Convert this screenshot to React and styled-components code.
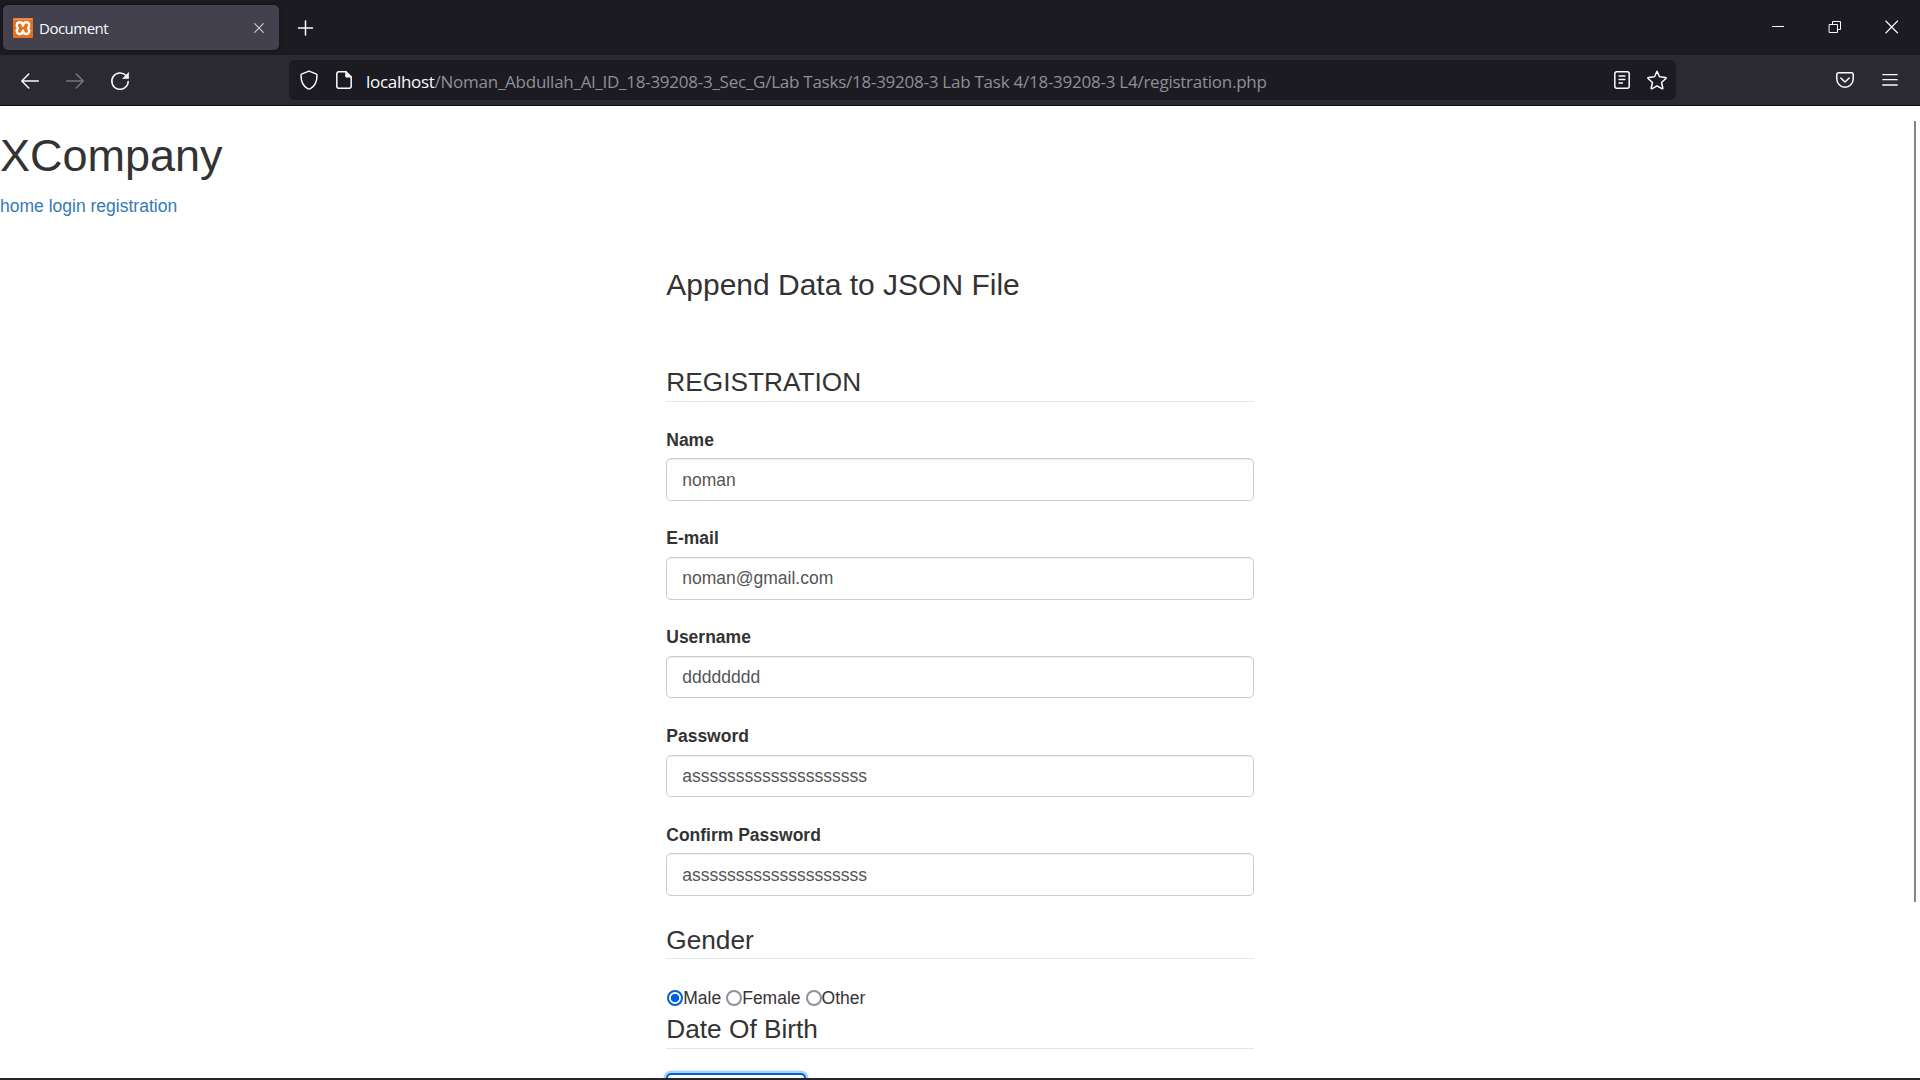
import React, { useState } from "react";
import styled, { createGlobalStyle, css } from "styled-components";

const GlobalStyle = createGlobalStyle`
  * { box-sizing: border-box; }
  html, body { margin: 0; padding: 0; height: 100%; overflow: hidden; background: #fff; }
  #root { height: 100%; }
`;

const uiFont = `"Open Sans", "Noto Sans", sans-serif`;
const pageFont = `"Liberation Sans", Arial, sans-serif`;

const Window = styled.div`
  width: 1920px;
  height: 1080px;
  display: flex;
  flex-direction: column;
  overflow: hidden;
  background: #fff;
`;

const TabStrip = styled.header`
  flex: none;
  height: 55px;
  display: flex;
  align-items: flex-start;
  padding: 5px 21px 0 3px;
  background: #1c1b22;
  color: #fbfbfe;
`;

const Tab = styled.div`
  width: 276px;
  height: 45px;
  display: flex;
  align-items: center;
  padding: 1px 14px 0 10px;
  border-radius: 5px;
  background: #42414d;
  box-shadow: 0 0 5px rgba(0, 0, 0, 0.4);
`;

const TabTitle = styled.span`
  flex: 1;
  margin-left: 6px;
  font: 15px/20px ${uiFont};
  letter-spacing: -0.5px;
`;

const Icon = styled.svg`
  display: block;
  flex: none;
  width: ${(p) => p.$size || 20}px;
  height: ${(p) => p.$size || 20}px;
  margin-top: ${(p) => p.$drop || 0}px;
  fill: none;
  stroke: ${(p) => p.$color || "#fbfbfe"};
  stroke-width: ${(p) => p.$stroke || 1.5};
  stroke-linecap: round;
  stroke-linejoin: round;
`;

const NewTab = styled.div`
  margin: 13px 0 0 16px;
`;

const WindowControls = styled.div`
  display: flex;
  gap: 43px;
  margin: 15px 0 0 auto;
`;

const Toolbar = styled.nav`
  flex: none;
  height: 51px;
  display: flex;
  align-items: center;
  padding: 0 20px;
  background: #2b2a33;
  border-bottom: 1px solid #0c0c0d;
`;

const IconGroup = styled.div`
  display: flex;
  gap: 25px;
  margin-left: ${(p) => (p.$end ? "auto" : "0")};
`;

const AddressBar = styled.div`
  width: 1387px;
  height: 40px;
  margin-left: 159px;
  display: flex;
  align-items: center;
  padding: 0 9px 0 10px;
  gap: 15px;
  border-radius: 5px;
  background: #1c1b22;
`;

const Address = styled.span`
  flex: 1;
  margin-left: -3px;
  padding-top: 3px;
  font: 17px/24px ${uiFont};
  letter-spacing: -0.25px;
  white-space: pre;
  color: #8f8f96;
`;

const Host = styled.span`
  color: #fbfbfe;
  letter-spacing: -0.3px;
`;

const Viewport = styled.main`
  flex: 1;
  min-height: 0;
  display: flex;
  justify-content: space-between;
  overflow: hidden;
  border-bottom: 2px solid #252427;
  font: 17.5px/25px ${pageFont};
  color: #333;
`;

const Page = styled.div`
  flex: 1;
  padding-top: 25px;
`;

const ScrollThumb = styled.div`
  width: 2px;
  height: 781px;
  margin: 15px 4px 0 0;
  background: #858585;
`;

const Brand = styled.h1`
  margin: 0 0 12.5px;
  font-size: 45px;
  font-weight: 400;
  line-height: 49.5px;
`;

const Links = styled.div`
  height: 25px;
  padding-top: 0.5px;
  display: flex;
  gap: 4.9px;
`;

const PageLink = styled.a`
  color: #337ab7;
  text-decoration: none;
`;

const Container = styled.section`
  width: 587.5px;
  margin: 50px 0 0 666.25px;
`;

const Title = styled.h3`
  margin: 0 0 62.5px;
  font-size: 30px;
  font-weight: 400;
  line-height: 33px;
`;

const Legend = styled.div`
  height: 38.5px;
  margin-bottom: 25px;
  padding-top: ${(p) => p.$inset || 0}px;
  border-bottom: 1px solid #e5e5e5;
  font-size: 26.25px;
  line-height: 37.5px;
`;

const Field = styled.label`
  display: flex;
  flex-direction: column;
  gap: 6.25px;
  margin-bottom: 25px;
`;

const FieldName = styled.span`
  height: 25px;
  padding-top: 0.5px;
  font-weight: 700;
`;

const inputBox = css`
  height: 42.5px;
  padding: 8px 15px 7px;
  border: 1px solid #ccc;
  border-radius: 5px;
  background: #fff;
  box-shadow: inset 0 1px 1px rgba(0, 0, 0, 0.075);
  font: 17.5px/25px ${pageFont};
  color: #555;
  outline: none;
`;

const Input = styled.input`
  ${inputBox}
  width: 100%;
`;

const DateInput = styled.input`
  ${inputBox}
  display: block;
  width: 140px;
  margin-top: -1.5px;
  border: 2px solid #0060df;
  box-shadow: 0 0 0 2.5px #a9d6f5;
`;

const Choices = styled.div`
  height: 26.5px;
  display: flex;
  align-items: center;
  padding: 1px 0 0 1px;
  gap: 5px;
`;

const Choice = styled.label`
  display: flex;
  align-items: center;
  line-height: 25px;
`;

const Radio = styled.input`
  appearance: none;
  width: 16px;
  height: 16px;
  margin: 0 0 1px;
  border: 2px solid #8f8f9d;
  border-radius: 50%;
  background: #fff;
  &:checked {
    border-color: #0060df;
    background: radial-gradient(circle, #0060df 3.8px, #fff 4.5px);
  }
`;

const Favicon = () => (
  <Icon viewBox="0 0 20 20" $stroke="2.4" $color="#fff">
    <rect width="20" height="20" rx="1" fill="#e8701d" stroke="none" />
    <path d="M1 1.2h18" stroke="#f6a66c" strokeWidth="1" />
    <path d="M10 7.6C9.6 5 8.400 4.200 6.700 4.200C3.500 4.200 3 8.200 4.900 10.100C3 12.200 3.500 16 6.700 16C8.400 16 9.600 15.200 10 12.800C10.400 15.200 11.600 16 13.300 16C16.500 16 17 12.200 15.100 10.100C17 8.200 16.500 4.200 13.300 4.200C11.600 4.200 10.400 5 10 7.600Z" />
  </Icon>
);

const fields = [
  ["Name", "noman"],
  ["E-mail", "noman@gmail.com"],
  ["Username", "dddddddd"],
  ["Password", "a" + "s".repeat(20)],
  ["Confirm Password", "a" + "s".repeat(20)],
];

export default function App() {
  const [gender, setGender] = useState("Male");
  return (
    <Window>
      <GlobalStyle />
      <TabStrip>
        <Tab>
          <Favicon />
          <TabTitle>Document</TabTitle>
          <Icon $size={12} viewBox="0 0 12 12" $drop={-1} $stroke="1.1" $color="#d0d0d6">
            <path d="M1.7 1.7l8.6 8.6M10.3 1.7l-8.6 8.6" />
          </Icon>
        </Tab>
        <NewTab>
          <Icon viewBox="0 0 20 20">
            <path d="M10.5 3v14M3.5 10h14" />
          </Icon>
        </NewTab>
        <WindowControls>
          <Icon $size={14} viewBox="0 0 14 14" $stroke="1">
            <path d="M1 6.5h12" strokeLinecap="butt" />
          </Icon>
          <Icon $size={14} viewBox="0 0 14 14" $stroke="1">
            <path d="M1.5 4.5h8v8h-8zM4.5 4V1.5h8v8H10" strokeLinejoin="miter" />
          </Icon>
          <Icon $size={14} viewBox="0 0 14 14" $stroke="1.1">
            <path d="M.8 1l11.8 12M12.6 1L.8 13" />
          </Icon>
        </WindowControls>
      </TabStrip>
      <Toolbar>
        <IconGroup>
          <Icon viewBox="0 0 20 20" $drop={1}>
            <path d="M18.3 10H2M8.8 3L1.8 10l7 7" />
          </Icon>
          <Icon viewBox="0 0 20 20" $drop={1} $color="#77767d">
            <path d="M1.7 10H18M11.2 3l7 7-7 7" />
          </Icon>
          <Icon viewBox="0 0 20 20" $drop={1}>
            <path d="M16 4.5A8.2 8.2 0 1 0 18.2 10.5" />
            <path d="M18.6 1.8v5.7h-5.7z" fill="#fbfbfe" strokeWidth="0.6" />
          </Icon>
        </IconGroup>
        <AddressBar>
          <Icon viewBox="0 0 20 20">
            <path d="M10 1.1l7 2.8c.6.2 1 .7 1 1.4 0 6.7-2.3 11-6.6 13.3-.9.5-1.9.5-2.8 0C4.3 16.3 2 12 2 5.3c0-.7.4-1.2 1-1.4z" />
          </Icon>
          <Icon viewBox="0 0 20 20">
            <path d="M12 1.8H4.8a2 2 0 0 0-2 2v12.4a2 2 0 0 0 2 2h10.4a2 2 0 0 0 2-2V7z" />
            <path d="M11.8 1.8V7h5.4z" fill="#fbfbfe" strokeWidth="1" />
          </Icon>
          <Address>
            <Host>localhost</Host>
            /Noman_Abdullah_Al_ID_18-39208-3_Sec_G/Lab Tasks/18-39208-3 Lab Task 4/18-39208-3 L4/registration.php
          </Address>
          <Icon viewBox="0 0 20 20">
            <rect x="2.8" y="1.8" width="14.4" height="16.4" rx="2" />
            <path d="M7 6h6M7 9.5h6M7 13h3.5" strokeWidth="1.3" />
          </Icon>
          <Icon viewBox="0 0 20 20">
            <path d="M10 1.2l2.5 5.6 6 .6c.6.1.8.7.4 1.1l-4.4 4 1.3 5.5c.1.6-.5 1-1 .7L10 15.8l-4.8 2.9c-.5.3-1.1-.1-1-.7l1.3-5.5-4.4-4c-.4-.4-.2-1 .4-1.1l6-.6z" />
          </Icon>
        </AddressBar>
        <IconGroup $end>
          <Icon viewBox="0 0 20 20">
            <path d="M3.5 2.8h13c1 0 1.7.7 1.7 1.7V9c0 4.5-3.7 8.2-8.2 8.2S1.8 13.5 1.8 9V4.5c0-1 .7-1.7 1.7-1.7zM5.8 8l4.2 4 4.2-4" />
          </Icon>
          <Icon viewBox="0 0 20 20" $stroke="1.3">
            <path d="M2.8 4.6h14.4M2.8 9.7h14.4M2.8 15h14.4" />
          </Icon>
        </IconGroup>
      </Toolbar>
      <Viewport>
        <Page>
          <Brand>XCompany</Brand>
          <Links>
            <PageLink>home</PageLink>
            <PageLink>login</PageLink>
            <PageLink>registration</PageLink>
          </Links>
          <Container>
            <Title>Append Data to JSON File</Title>
            <Legend>REGISTRATION</Legend>
            {fields.map(([name, value]) => (
              <Field key={name}>
                <FieldName>{name}</FieldName>
                <Input defaultValue={value} />
              </Field>
            ))}
            <Legend $inset={1}>Gender</Legend>
            <Choices>
              {["Male", "Female", "Other"].map((g) => (
                <Choice key={g}>
                  <Radio type="radio" name="gender" checked={gender === g} onChange={() => setGender(g)} />
                  {g}
                </Choice>
              ))}
            </Choices>
            <Legend $inset={0.5}>Date Of Birth</Legend>
            <DateInput />
          </Container>
        </Page>
        <ScrollThumb />
      </Viewport>
    </Window>
  );
}
